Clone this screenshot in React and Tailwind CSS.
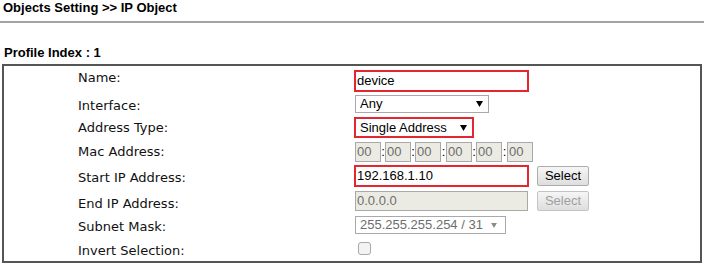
import React from "react";

function Arrow({ color = "#000", w = 7, h = 6 }) {
  return (
    <svg width={w} height={h} viewBox="0 0 7 6" className="shrink-0">
      <polygon points="0,0 7,0 3.5,6" fill={color} />
    </svg>
  );
}

function Row({ h, label, lcls = "", children }) {
  return (
    <div className={`flex items-center ${h}`}>
      <div className={`w-[276px] shrink-0 font-['DejaVu_Sans',Verdana,sans-serif] text-[13px] leading-[15px] text-[#111] ${lcls}`}>
        {label}
      </div>
      <div className="flex items-center">{children}</div>
    </div>
  );
}

function Btn({ disabled }) {
  return (
    <div
      className={`ml-[8px] flex h-[20px] w-[52px] items-center justify-center rounded-[2px] border bg-gradient-to-b from-[#f6f6f6] to-[#dedede] text-[13px] ${
        disabled ? "border-[#c4c4c4] text-[#a0a0a0]" : "border-[#adadad] text-black"
      }`}
    >
      Select
    </div>
  );
}

function MacBox() {
  return (
    <div className="flex h-[20px] w-[26px] items-center border border-[#a9a9a9] bg-[#ebebe4] pl-[1px] text-[13px] text-[#6d6d6d]">
      00
    </div>
  );
}

function Colon({ wide }) {
  return <div className={`${wide ? "w-[5px]" : "w-[4px]"} text-center text-[13px] leading-[15px]`}>:</div>;
}

export default function App() {
  return (
    <div className="relative h-[266px] w-[704px] overflow-hidden bg-white font-['Liberation_Sans',Arial,sans-serif] text-black">
      <div className="pl-[3px] text-[13px] font-bold leading-[16px]">Objects Setting &gt;&gt; IP Object</div>
      <div className="mt-[5px] h-[2px] w-full bg-[#a3a3a3]" />
      <div className="mt-[22px] pl-[4px] text-[13px] font-bold leading-[16px]">Profile Index : 1</div>
      <div className="ml-[2px] mt-[3px] h-[199px] w-[700px] border-2 border-[#555] pl-[74px] pt-[3px]">
        <Row h="h-[24px]" label="Name:" lcls="mb-[8px]">
          <div className="flex h-[22px] w-[175px] items-center border-2 border-[#e3262f] pl-[1px] text-[13px]">
            device
          </div>
        </Row>
        <Row h="h-[22px]" label="Interface:" lcls="mt-[3px]">
          <div className="ml-[1px] flex h-[18px] w-[134px] items-center justify-between border border-[#a9a9a9] pl-[4px] pr-[5px] text-[13px]">
            <span>Any</span>
            <Arrow />
          </div>
        </Row>
        <Row h="h-[25px]" label="Address Type:">
          <div className="flex h-[21px] w-[120px] items-center justify-between border-2 border-[#e3262f] pl-[4px] pr-[5px] text-[13px]">
            <span>Single Address</span>
            <Arrow />
          </div>
        </Row>
        <Row h="h-[23px]" label="Mac Address:">
          <div className="ml-[1px] flex items-center">
            <MacBox />
            <Colon />
            <MacBox />
            <Colon />
            <MacBox />
            <Colon wide />
            <MacBox />
            <Colon />
            <MacBox />
            <Colon wide />
            <MacBox />
          </div>
        </Row>
        <Row h="h-[26px]" label="Start IP Address:" lcls="mt-[3px]">
          <div className="flex h-[22px] w-[175px] items-center border-2 border-[#e3262f] pl-[1px] text-[13px]">
            192.168.1.10
          </div>
          <Btn />
        </Row>
        <Row h="h-[23px]" label="End IP Address:" lcls="mt-[5px]">
          <div className="ml-[1px] mr-[1px] flex h-[20px] w-[173px] items-center border border-[#a9a9a9] bg-[#ebebe4] pl-[1px] text-[13px] text-[#6d6d6d]">
            0.0.0.0
          </div>
          <Btn disabled />
        </Row>
        <Row h="h-[26px]" label="Subnet Mask:" lcls="mt-[3px]">
          <div className="ml-[1px] flex h-[18px] w-[151px] items-center justify-between border border-[#a9a9a9] pl-[4px] pr-[8px] text-[13px] text-[#6d6d6d]">
            <span>255.255.255.254 / 31</span>
            <Arrow color="#8a8a8a" w={6} h={5} />
          </div>
        </Row>
        <Row h="h-[20px]" label="Invert Selection:" lcls="mt-[5px]">
          <div className="ml-[4px] h-[13px] w-[13px] rounded-[3px] border border-[#a8a8a8] bg-[#f3f3f3]" />
        </Row>
      </div>
    </div>
  );
}
